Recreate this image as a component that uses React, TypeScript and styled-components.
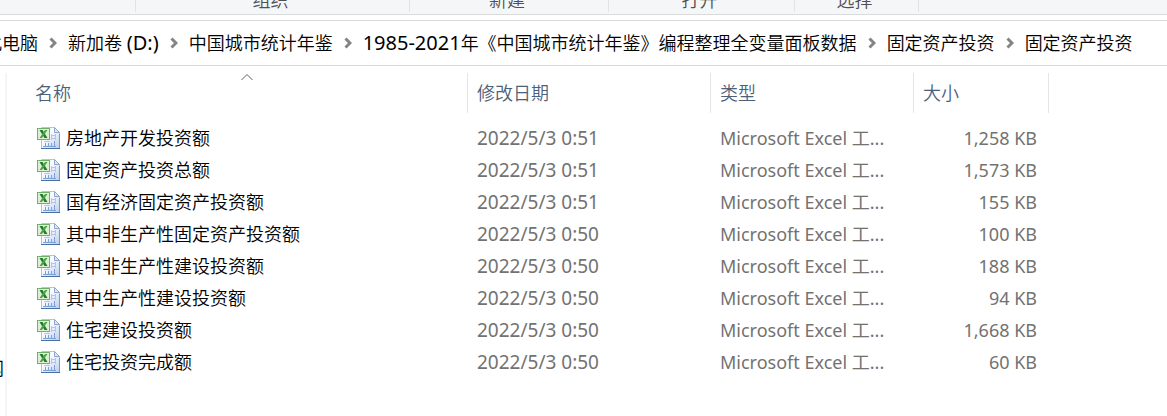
import React from "react";
import styled, { createGlobalStyle } from "styled-components";

const GlobalStyle = createGlobalStyle`
  * { box-sizing: border-box; }
  html, body, #root { height: 100%; }
  body {
    margin: 0;
    background: #fff;
    color: #000;
    font: 350 18px/24px "Noto Sans", "Noto Sans CJK SC", sans-serif;
    overflow: hidden;
  }
`;

const Window = styled.div`
  display: flex;
  flex-direction: column;
  min-height: 100vh;
`;

const Ribbon = styled.div`
  display: flex;
  height: 15px;
  padding-bottom: 2px;
  overflow: hidden;
  background: #f5f6f7;
  border-bottom: 1px solid #dadbdc;
`;

const RibbonGroup = styled.div<{ $width: number }>`
  display: flex;
  flex: none;
  align-items: flex-end;
  justify-content: center;
  width: ${(p) => p.$width}px;
  height: 12px;
  padding-right: 4px;
  border-right: 1px solid #e2e3e4;
  color: #505050;
`;

const AddressBar = styled.nav`
  display: flex;
  align-items: center;
  height: 46px;
  margin-top: 5px;
  overflow: hidden;
  border: solid #d9d9d9;
  border-width: 1px 0;
`;

const Crumbs = styled.ol`
  display: flex;
  align-items: center;
  margin: 0 0 0 -16px;
  padding: 0;
  list-style: none;
`;

const Crumb = styled.li`
  display: flex;
  align-items: center;
  white-space: nowrap;
`;

const CrumbLink = styled.a`
  color: inherit;
  text-decoration: none;
`;

const Latin = styled.span`
  font-size: 20px;
  font-weight: 400;
`;

const Chevron = styled.svg`
  width: 8px;
  height: 12px;
  margin: 0 11px;
  fill: none;
  stroke: #848484;
  stroke-width: 3;
`;

const Content = styled.div`
  display: flex;
  flex: 1;
  padding-top: 7px;
`;

const TreePane = styled.aside`
  display: flex;
  flex: none;
  flex-direction: column;
  justify-content: flex-end;
  align-items: flex-end;
  width: 7px;
  padding: 0 1px 36px 0;
  overflow: hidden;
  border-right: 2px solid #f5f5f5;
  white-space: nowrap;
`;

const FileTable = styled.table`
  flex: none;
  align-self: flex-start;
  width: 1042px;
  border-collapse: separate;
  border-spacing: 0;
  table-layout: fixed;
`;

const Column = styled.col<{ $width: number }>`
  width: ${(p) => p.$width}px;
`;

const HeadCell = styled.th<{ $first?: boolean }>`
  height: 40px;
  padding: 0 0 0 ${(p) => (p.$first ? 28 : 9)}px;
  border-right: 1px solid #e5e5e5;
  color: #4c607a;
  font-weight: inherit;
  text-align: left;
`;

const SortButton = styled.button`
  display: block;
  position: relative;
  width: 100%;
  height: 40px;
  padding: 0;
  border: 0;
  background: none;
  color: inherit;
  font: inherit;
  text-align: left;
`;

const SortArrow = styled.svg`
  position: absolute;
  top: 0;
  left: 206px;
  width: 12px;
  height: 8px;
  fill: none;
  stroke: #606060;
`;

const Body = styled.tbody`
  &::before {
    content: "";
    display: table-row;
    height: 9px;
  }
`;

const Cell = styled.td<{ $align?: "right"; $large?: boolean }>`
  height: 32px;
  padding: 0 ${(p) => (p.$align ? 12 : 0)}px 0 9px;
  overflow: hidden;
  color: #727272;
  font-size: ${(p) => (p.$large ? 19 : 18)}px;
  font-weight: 400;
  text-align: ${(p) => p.$align ?? "left"};
  white-space: nowrap;
`;

const NameCell = styled.td`
  height: 32px;
  padding: 0 0 0 30px;
`;

const FileName = styled.span`
  display: flex;
  align-items: center;
  gap: 6px;
`;

const ExcelIcon = () => (
  <svg width="23" height="24" viewBox="0 0 23 24" aria-hidden="true">
    <defs>
      <linearGradient id="sheet" x1="0" y1="0" x2="1" y2="1">
        <stop offset="0.4" stopColor="#f8fbff" />
        <stop offset="1" stopColor="#b5cdee" />
      </linearGradient>
    </defs>
    <path d="M4.5 1.5H17.5L22.5 6.5V22.5H4.5Z" fill="url(#sheet)" stroke="#b4c4de" />
    <path d="M22.5 8V22.5" fill="none" stroke="#7b98cb" />
    <path d="M4 22.500H23" stroke="#4a6dab" />
    <path d="M17.5 1.5V6.500H22.500Z" fill="#dce7f6" stroke="#8fa8cf" />
    <path d="M14 9.500H19M14 12.500H19M7 15.500H13M14.500 8V14M18.500 8V14" stroke="#b3c6e4" />
    <path d="M8.500 17V20M11.500 17V20M14.500 17V20M17.500 15V20M6 20.500H19" stroke="#7f9fd2" />
    <rect x="0.500" y="2.500" width="12" height="11" fill="#dff0da" stroke="#6fb068" />
    <path d="M2.500 4H5.500L10.500 12H7.500Z" fill="#1f7a29" />
    <path d="M10.500 4H8L2.500 12H5Z" fill="#4ca544" />
  </svg>
);

const ribbonGroups = [
  { label: "", width: 136 },
  { label: "组织", width: 274 },
  { label: "新建", width: 199 },
  { label: "打开", width: 186 },
  { label: "选择", width: 124 },
];

const crumbs: React.ReactNode[] = [
  "此电脑",
  <>
    新加卷 <Latin>(D:)</Latin>
  </>,
  "中国城市统计年鉴",
  <>
    <Latin>1985-2021</Latin>年《中国城市统计年鉴》编程整理全变量面板数据
  </>,
  "固定资产投资",
  "固定资产投资",
];

const files = [
  ["房地产开发投资额", "2022/5/3 0:51", "1,258 KB"],
  ["固定资产投资总额", "2022/5/3 0:51", "1,573 KB"],
  ["国有经济固定资产投资额", "2022/5/3 0:51", "155 KB"],
  ["其中非生产性固定资产投资额", "2022/5/3 0:50", "100 KB"],
  ["其中非生产性建设投资额", "2022/5/3 0:50", "188 KB"],
  ["其中生产性建设投资额", "2022/5/3 0:50", "94 KB"],
  ["住宅建设投资额", "2022/5/3 0:50", "1,668 KB"],
  ["住宅投资完成额", "2022/5/3 0:50", "60 KB"],
];

export default function App() {
  return (
    <Window>
      <GlobalStyle />
      <Ribbon>
        {ribbonGroups.map((group) => (
          <RibbonGroup key={group.width} $width={group.width}>
            {group.label}
          </RibbonGroup>
        ))}
      </Ribbon>
      <AddressBar>
        <Crumbs>
          {crumbs.map((crumb, i) => (
            <Crumb key={i}>
              {i > 0 && (
                <Chevron viewBox="0 0 8 12" aria-hidden="true">
                  <path d="M1.500 1.500L6 6L1.500 10.500" />
                </Chevron>
              )}
              <CrumbLink href="#">{crumb}</CrumbLink>
            </Crumb>
          ))}
        </Crumbs>
      </AddressBar>
      <Content>
        <TreePane>网</TreePane>
        <FileTable>
          <colgroup>
            <Column $width={461} />
            <Column $width={243} />
            <Column $width={203} />
            <Column $width={135} />
          </colgroup>
          <thead>
            <tr>
              <HeadCell $first>
                <SortButton>
                  名称
                  <SortArrow viewBox="0 0 12 8" aria-hidden="true">
                    <path d="M0.500 7L6 1.500L11.500 7" />
                  </SortArrow>
                </SortButton>
              </HeadCell>
              <HeadCell><SortButton>修改日期</SortButton></HeadCell>
              <HeadCell><SortButton>类型</SortButton></HeadCell>
              <HeadCell><SortButton>大小</SortButton></HeadCell>
            </tr>
          </thead>
          <Body>
            {files.map(([name, date, size]) => (
              <tr key={name}>
                <NameCell>
                  <FileName>
                    <ExcelIcon />
                    {name}
                  </FileName>
                </NameCell>
                <Cell $large>{date}</Cell>
                <Cell>Microsoft Excel 工...</Cell>
                <Cell $align="right">{size}</Cell>
              </tr>
            ))}
          </Body>
        </FileTable>
      </Content>
    </Window>
  );
}
